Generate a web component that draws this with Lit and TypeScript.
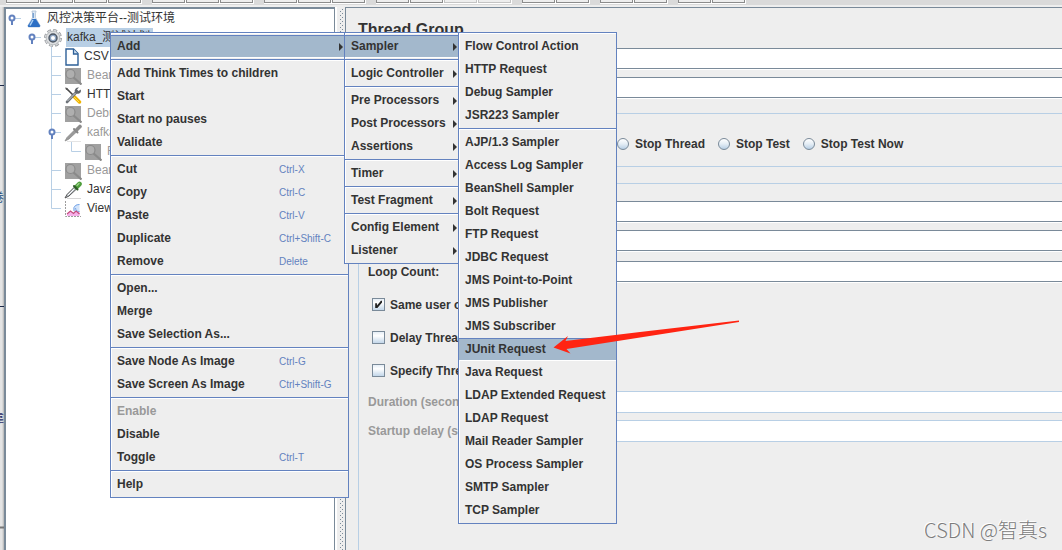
import { LitElement, html, css, svg, nothing } from "lit";
import { customElement, property } from "lit/decorators.js";
import { classMap } from "lit/directives/class-map.js";

type Entry = {
  label: string;
  keys?: string;
  submenu?: boolean;
  selected?: boolean;
  disabled?: boolean;
};
type Group = Entry[];

const mainMenu: Group[] = [
  [{ label: "Add", submenu: true, selected: true }],
  [
    { label: "Add Think Times to children" },
    { label: "Start" },
    { label: "Start no pauses" },
    { label: "Validate" },
  ],
  [
    { label: "Cut", keys: "Ctrl-X" },
    { label: "Copy", keys: "Ctrl-C" },
    { label: "Paste", keys: "Ctrl-V" },
    { label: "Duplicate", keys: "Ctrl+Shift-C" },
    { label: "Remove", keys: "Delete" },
  ],
  [{ label: "Open..." }, { label: "Merge" }, { label: "Save Selection As..." }],
  [
    { label: "Save Node As Image", keys: "Ctrl-G" },
    { label: "Save Screen As Image", keys: "Ctrl+Shift-G" },
  ],
  [
    { label: "Enable", disabled: true },
    { label: "Disable" },
    { label: "Toggle", keys: "Ctrl-T" },
  ],
  [{ label: "Help" }],
];

const addMenu: Group[] = [
  [{ label: "Sampler", submenu: true, selected: true }],
  [{ label: "Logic Controller", submenu: true }],
  [
    { label: "Pre Processors", submenu: true },
    { label: "Post Processors", submenu: true },
    { label: "Assertions", submenu: true },
  ],
  [{ label: "Timer", submenu: true }],
  [{ label: "Test Fragment", submenu: true }],
  [
    { label: "Config Element", submenu: true },
    { label: "Listener", submenu: true },
  ],
];

const samplerMenu: Group[] = [
  ["Flow Control Action", "HTTP Request", "Debug Sampler", "JSR223 Sampler"].map(
    (label) => ({ label })
  ),
  [
    "AJP/1.3 Sampler",
    "Access Log Sampler",
    "BeanShell Sampler",
    "Bolt Request",
    "FTP Request",
    "JDBC Request",
    "JMS Point-to-Point",
    "JMS Publisher",
    "JMS Subscriber",
    "JUnit Request",
    "Java Request",
    "LDAP Extended Request",
    "LDAP Request",
    "Mail Reader Sampler",
    "OS Process Sampler",
    "SMTP Sampler",
    "TCP Sampler",
  ].map((label) => ({ label, selected: label === "JUnit Request" })),
];

@customElement("popup-menu")
export class PopupMenu extends LitElement {
  @property({ attribute: false }) groups: Group[] = [];

  static styles = css`
    :host {
      display: block;
      box-sizing: border-box;
      padding: 2px 0 1px;
      border: 1px solid #6382bf;
      background: #eee;
      box-shadow: inset 1px 1px 0 #fff;
      font: bold 12px/21px "Liberation Sans", Arial, sans-serif;
      color: #333;
    }
    .group + .group {
      margin-top: 1px;
      padding-top: 2px;
      border-top: 1px solid #6382bf;
      box-shadow: inset 0 1px 0 #fff;
    }
    .item {
      display: flex;
      align-items: center;
      width: 100%;
      height: 23px;
      margin: 0;
      padding: 0 5px 0 6px;
      border: 0 solid transparent;
      border-width: 1px 0;
      background: none;
      font: inherit;
      color: inherit;
      text-align: left;
      white-space: nowrap;
    }
    .selected {
      background: #a3b8cc;
      border-top-color: #6382bf;
      border-bottom-color: #fff;
    }
    .item:disabled {
      color: #999;
    }
    .label {
      flex: 1;
    }
    .keys {
      width: 64px;
      font-weight: normal;
      font-size: 10px;
      color: #6382bf;
    }
    .arrow {
      width: 4px;
      height: 8px;
      fill: #333;
    }
  `;

  render() {
    return this.groups.map(
      (group) => html`<div class="group" role="group">
        ${group.map(
          (e) => html`<button
            class=${classMap({ item: true, selected: !!e.selected })}
            role="menuitem"
            ?disabled=${!!e.disabled}
          >
            <span class="label">${e.label}</span>
            ${e.keys ? html`<span class="keys">${e.keys}</span>` : nothing}
            ${e.submenu
              ? html`<svg class="arrow" viewBox="0 0 4 8"><path d="M0 0L4 4L0 8Z" /></svg>`
              : nothing}
          </button>`
        )}
      </div>`
    );
  }
}

const icons: Record<string, unknown> = {
  flask: svg`
    <path d="M8 1h4v1l-.6 1v4.500L16 15.500Q16.500 17 15 17H5Q3.500 17 4 15.500L8.600 7.500V3L8 2Z" fill="#dce8f4" stroke="#a9bcd2" stroke-width=".8"/>
    <path d="M8.300 9H11.900L16 15.500Q16.400 17 15 17H5Q3.600 17 4 15.500Z" fill="#2d6fc4"/>
    <path d="M9 10L6 15.500" stroke="#a9d0f5" stroke-width="1.500"/>
    <path d="M9.200 3V8" stroke="#4f86c6" stroke-width="1"/>`,
  gear: svg`
    <circle cx="9" cy="9" r="7.600" fill="none" stroke="#9a9da1" stroke-width="2.800" stroke-dasharray="3.800 2.169"/>
    <circle cx="9" cy="9" r="6.900" fill="#dcdee0" stroke="#aaadb0" stroke-width=".8"/>
    <circle cx="9" cy="9" r="7.600" fill="none" stroke="#d6d8da" stroke-width="1.400" stroke-dasharray="2.600 3.369" stroke-dashoffset="-.6"/>
    <circle cx="9" cy="9" r="4" fill="#8fa6c4" stroke="#4b5562" stroke-width="1.400"/>
    <circle cx="9" cy="9" r="2" fill="#fff"/>`,
  file: svg`
    <path d="M2 1H9.500L14 5.500V17H2Z" fill="#fff" stroke="#2e6098" stroke-width="1.400"/>
    <path d="M9.500 1V6H14" fill="#cfe0f1" stroke="#2e6098" stroke-width="1.300"/>`,
  search: svg`
    <rect x="1" y="1" width="16" height="16" fill="#a0a0a0"/>
    <path d="M9 10L17.500 17.500" stroke="#8a8a8a" stroke-width="2.200"/>
    <circle cx="6.500" cy="7" r="4.500" fill="#afafaf" stroke="#8a8a8a" stroke-width="1.200"/>`,
  tools: svg`
    <path d="M3 3L10 10" stroke="#444" stroke-width="1.600"/>
    <path d="M1 1.500L3.500 2L4.500 4.500L2 3.800Z" fill="#555"/>
    <path d="M10 10.500L15.500 16" stroke="#f0b400" stroke-width="3.400" stroke-linecap="round"/>
    <path d="M10 11L15 16" stroke="#fbdc58" stroke-width="1"/>
    <path d="M3 16L12 6.500" stroke="#6f747a" stroke-width="2.600" stroke-linecap="round"/>
    <path d="M3.500 15L12 6.500" stroke="#c6cbd1" stroke-width="1"/>
    <path d="M15 1.500L13 3.500L14.500 5L16.800 3.400Q17.500 6.500 15 7.500Q12.500 8.200 11 6.500Q10 4.500 11.500 2.700Q13 1 15 1.500Z" fill="#62676d"/>`,
  dropperOff: svg`
    <path d="M1 17L3 13.500L11 5.500L13 7.500L5 15Z" fill="#9a9a9a" stroke="#8c8c8c" stroke-width=".8"/>
    <path d="M10 5L13.500 8.500" stroke="#858585" stroke-width="2" stroke-linecap="round"/>
    <path d="M12.500 6L16 2.500" stroke="#8c8c8c" stroke-width="3.600" stroke-linecap="round"/>
    <path d="M3 17.500H17" stroke="#ddd" stroke-width=".8"/>`,
  dropper: svg`
    <path d="M1 17L3 13.500L10.500 6L12.500 8L5 15Z" fill="#bfc6cc" stroke="#555" stroke-width="1"/>
    <path d="M4 14L10 8" stroke="#fff" stroke-width="1"/>
    <path d="M12.500 6L15.500 3" stroke="#4f9e3c" stroke-width="4.600" stroke-linecap="round"/>
    <path d="M13 4.500L15 2.500" stroke="#9ed48c" stroke-width="1.200" stroke-linecap="round"/>
    <path d="M10 5L13.500 8.500" stroke="#2e5a27" stroke-width="2" stroke-linecap="round"/>
    <path d="M3 17.500H17" stroke="#ccc" stroke-width=".8"/>`,
  chart: svg`
    <path d="M1.500 1V16.500H17" fill="none" stroke="#9d9d9d" stroke-width="1" stroke-dasharray="2 1"/>
    <path d="M10.500 13Q8.500 8 11 5.500Q13.500 3.500 15.500 4.500V12Z" fill="#d3e4fa"/>
    <path d="M10 11Q9 7 11.500 5.500Q13 4.500 15.500 4.500M15.500 11.500Q12 12 11.500 8" fill="none" stroke="#74a3e6" stroke-width="1"/>
    <path d="M3 16V14L6.500 11L9.500 13.500L12 11.500L15.500 12V16Z" fill="#f6b0ea"/>
    <path d="M3 14L6.500 11L9.500 13.500L12 11L15.500 14" fill="none" stroke="#c44d7e" stroke-width="1.200"/>`,
};

type Node = {
  label: string;
  icon: string;
  open?: boolean;
  disabled?: boolean;
  selected?: boolean;
  guides: string[];
};

/* guides: one cell per level; "h" = handle stub, "v" = line through, "t" = tee, "l" = last child */
const nodes: Node[] = [
  { label: "风控决策平台--测试环境", icon: "flask", open: true, guides: ["h"] },
  { label: "kafka_测试计划", icon: "gear", open: true, selected: true, guides: ["", "h"] },
  { label: "CSV", icon: "file", guides: ["", "", "t"] },
  { label: "Bean", icon: "search", disabled: true, guides: ["", "", "t"] },
  { label: "HTTP", icon: "tools", guides: ["", "", "t"] },
  { label: "Debu", icon: "search", disabled: true, guides: ["", "", "t"] },
  { label: "kafka", icon: "dropperOff", open: true, disabled: true, guides: ["", "", "t"] },
  { label: "R", icon: "search", disabled: true, guides: ["", "", "v", "l"] },
  { label: "Bean", icon: "search", disabled: true, guides: ["", "", "t"] },
  { label: "Java", icon: "dropper", guides: ["", "", "t"] },
  { label: "View", icon: "chart", guides: ["", "", "l"] },
];

const guidePath: Record<string, string> = {
  h: "M6 9.500H15",
  t: "M5.500 0V19M5.500 9.500H15",
  l: "M5.500 0V9.500H15",
  v: "M5.500 0V19",
};

@customElement("plan-tree")
export class PlanTree extends LitElement {
  static styles = css`
    :host {
      display: block;
      background: #fff;
      font: 12px/19px "Liberation Sans", "Noto Sans CJK SC", Arial, sans-serif;
      color: #333;
      overflow: hidden;
    }
    .row {
      display: flex;
      align-items: center;
      height: 19px;
      white-space: nowrap;
    }
    .guide {
      flex: none;
      width: 20px;
      height: 19px;
    }
    .icon {
      flex: none;
      width: 18px;
      height: 18px;
      margin: 0 4px 0 -2px;
    }
    .icon.narrow {
      margin-right: 1px;
    }
    .label {
      height: 19px;
      padding: 0 3px 0 1px;
    }
    .selected {
      background: #b8cfe5;
    }
    .disabled {
      color: #999;
    }
  `;

  render() {
    return nodes.map(
      (n) => html`<div class="row" role="treeitem">
        ${n.guides.map(
          (g, i) => html`<svg class="guide" viewBox="0 0 20 19">
            ${g ? svg`<path d=${guidePath[g]} fill="none" stroke="#b8cfe5"/>` : nothing}
            ${n.open && i === n.guides.length - 1
              ? svg`<path d="M6 11V16" stroke="#6382bf" stroke-width="2"/>
                    <circle cx="6" cy="9" r="2.500" fill="#fff" stroke="#6382bf" stroke-width="2"/>`
              : nothing}
          </svg>`
        )}
        <svg class=${classMap({ icon: true, narrow: n.icon === "file" })} viewBox="0 0 18 18">
          ${icons[n.icon]}
        </svg>
        <span class=${classMap({ label: true, selected: !!n.selected, disabled: !!n.disabled })}
          >${n.label}</span
        >
      </div>`
    );
  }
}

/* Tool buttons by toolbar group; the "off:" prefix marks the greyed ones. */
const toolbar = [
  ["Templates", "New", "Open", "Save"],
  ["Cut", "Copy", "Paste"],
  ["Expand", "Collapse", "Toggle"],
  ["Start", "Start no pauses", "off:Stop", "off:Shutdown"],
  ["Clear", "Clear All"],
  ["Search", "Reset Search"],
  ["Function Helper", "Help"],
];

@customElement("app-root")
export class AppRoot extends LitElement {
  static styles = css`
    :host {
      display: flex;
      position: relative;
      flex-direction: column;
      height: 100vh;
      overflow: hidden;
      background: #eee;
      font: bold 12px/16px "Liberation Sans", "Noto Sans CJK SC", Arial, sans-serif;
      color: #333;
    }
    * {
      box-sizing: border-box;
    }
    .toolbar {
      display: flex;
      flex: none;
      gap: 10px;
      height: 7px;
      padding-left: 6px;
      background: #dadada;
      border-bottom: 2px solid #eee;
    }
    .tools {
      display: flex;
      height: 4px;
      overflow: hidden;
    }
    .tool {
      width: 34px;
      height: 4px;
      padding: 0;
      border: 0 solid #fff;
      border-width: 0 1px 1px 0;
      background: #eee;
      box-shadow: inset 1px -1px 0 #8c8c8c, inset -1px 0 0 #8c8c8c;
    }
    .tool:disabled {
      box-shadow: inset 1px -1px 0 #c4c4c4, inset -1px 0 0 #c4c4c4;
    }
    .body {
      display: flex;
      flex: 1;
      min-height: 0;
    }
    .edge {
      flex: none;
      width: 4px;
      overflow: hidden;
      background: linear-gradient(90deg, #e4e4e4 2px, #b4b4b4);
    }
    .edge-lines {
      display: block;
      width: 4px;
      height: 543px;
      font: 12px "Noto Sans CJK SC", sans-serif;
    }
    .tree {
      flex: none;
      width: 331px;
      border: solid #7a8a99;
      border-width: 2px 1px 0 2px;
    }
    .divider {
      flex: none;
      width: 10px;
      border-left: 2px solid #fff;
    }
    .dots {
      display: block;
      width: 8px;
      height: 100%;
    }
    .pane {
      flex: 1;
      min-width: 0;
      padding: 12px 0 0 12px;
      border: solid #7a8a99;
      border-width: 1px 0 0 1px;
      display: flex;
      flex-direction: column;
    }
    .title {
      margin: 0 0 8px;
      font-size: 16px;
      line-height: 20px;
    }
    .fields {
      display: flex;
      flex-direction: column;
      gap: 8px;
    }
    .field {
      display: flex;
      align-items: center;
      height: 21px;
      white-space: nowrap;
    }
    .name {
      flex: none;
      width: 150px;
    }
    .text {
      flex: 1;
      min-width: 0;
      height: 21px;
      padding: 0 4px;
      border: solid #7a8a99;
      border-width: 1px 0 1px 1px;
      border-radius: 0;
      background: #fff;
      box-shadow: 0 1px 0 #fff;
      font: inherit;
      color: inherit;
      outline: none;
    }
    .off {
      height: 22px;
      color: #999;
    }
    .off .text {
      height: 22px;
      border-color: #b8cfe5;
      box-shadow: none;
    }
    .panel {
      min-width: 0;
      margin: 0;
      border: solid #b8cfe5;
      border-width: 1px 0 1px 1px;
    }
    .actions {
      height: 54px;
      margin: 15px 0 16px;
      padding: 22px 0 0 10px;
    }
    .radios {
      display: flex;
      align-items: center;
      gap: 13px;
      white-space: nowrap;
    }
    .choice {
      display: flex;
      align-items: center;
      gap: 6px;
      white-space: nowrap;
    }
    .on-error {
      flex: none;
      display: flex;
      justify-content: flex-end;
      width: 235px;
    }
    .radio,
    .tick {
      flex: none;
      appearance: none;
      width: 12px;
      height: 12px;
      margin: 0;
      border: 1px solid #7a8a99;
      border-radius: 50%;
      background: linear-gradient(#fff, #e4edf5 50%, #b8cfe5);
    }
    .tick {
      width: 13px;
      height: 13px;
      border-radius: 0;
      background: linear-gradient(#e6eef6, #fff 35%, #c2d6e9);
    }
    .tick:checked::before {
      content: "";
      display: block;
      width: 11px;
      height: 11px;
      background: #222;
      clip-path: polygon(20% 38%, 36% 38%, 36% 58%, 72% 16%, 82% 16%, 82% 32%, 40% 82%, 20% 82%);
    }
    .threads {
      flex: 1;
      padding: 17px 0 0 9px;
      border-bottom: 0;
    }
    .loop {
      margin-top: 10px;
    }
    .ticks {
      display: grid;
      grid-auto-rows: 33px;
      margin: 6px 0 4px;
      padding-left: 4px;
    }
    .ticks .choice {
      gap: 5px;
    }
    .schedule {
      gap: 7px;
    }
    .menu-main,
    .menu-add,
    .menu-sampler {
      position: absolute;
      top: 32px;
      left: 110px;
      width: 239px;
    }
    .menu-add {
      left: 344px;
      width: 119px;
    }
    .menu-sampler {
      left: 458px;
      width: 159px;
    }
    .pointer {
      position: absolute;
      top: 320px;
      left: 552px;
      width: 190px;
      height: 36px;
      pointer-events: none;
    }
    .watermark {
      position: absolute;
      right: 15px;
      bottom: 6px;
      font: 300 20px/28px "Noto Sans CJK SC", sans-serif;
      color: #7c7c7c;
      text-shadow: -1px -1px 0 #fff;
    }
  `;

  private field(id: string, label: string, off = false) {
    return html`<div class=${classMap({ field: true, off })}>
      <label class="name" for=${id}>${label}</label>
      <input class="text" id=${id} type="text" ?disabled=${off} />
    </div>`;
  }

  private radio(label: string) {
    return html`<label class="choice"
      ><input class="radio" type="radio" name="on-error" />${label}</label
    >`;
  }

  private tick(label: string, checked = false) {
    return html`<label class="choice"
      ><input class="tick" type="checkbox" .checked=${checked} />${label}</label
    >`;
  }

  render() {
    return html`
      <div class="toolbar" role="toolbar">
        ${toolbar.map(
          (g) => html`<div class="tools">
            ${g.map((t) => {
              const off = t.startsWith("off:");
              return html`<button class="tool" aria-label=${t.replace("off:", "")} ?disabled=${off}></button>`;
            })}
          </div>`
        )}
      </div>
      <div class="body">
        <div class="edge">
          <svg class="edge-lines" viewBox="0 0 4 543">
            <path d="M0 78.500H4M0 299.500H4" stroke="#1c2a4a" />
            <path d="M0 520.500H4" stroke="#777" stroke-width="2" />
            <text x="4" y="195" text-anchor="end" fill="#24507e">卷</text>
            <text x="4" y="416" text-anchor="end" fill="#2c2c66">靠</text>
          </svg>
        </div>
        <plan-tree class="tree" role="tree"></plan-tree>
        <div class="divider">
          <svg class="dots">
            <defs>
              <pattern id="grip" width="4" height="4" patternUnits="userSpaceOnUse">
                <path d="M3 0h1v1h-1zM1 2h1v1h-1z" fill="#7a8a99" />
              </pattern>
            </defs>
            <rect x="3" y="2" width="4" height="100%" fill="url(#grip)" />
          </svg>
        </div>
        <main class="pane">
          <h1 class="title">Thread Group</h1>
          <div class="fields">
            ${this.field("name", "Name:")} ${this.field("comments", "Comments:")}
          </div>
          <fieldset class="panel actions" aria-label="Action to be taken after a Sampler error">
            <div class="radios">
              <div class="on-error">${this.radio("Continue")}</div>
              ${this.radio("Stop Thread")} ${this.radio("Stop Test")} ${this.radio("Stop Test Now")}
            </div>
          </fieldset>
          <fieldset class="panel threads" aria-label="Thread Properties">
            <div class="fields">
              ${this.field("threads", "Number of Threads:")} ${this.field("ramp", "Ramp-up period:")}
            </div>
            <div class="loop">${this.field("loops", "Loop Count:")}</div>
            <div class="ticks">
              ${this.tick("Same user on", true)} ${this.tick("Delay Thread")}
              ${this.tick("Specify Thread")}
            </div>
            <div class="fields schedule">
              ${this.field("duration", "Duration (seconds):", true)}
              ${this.field("delay", "Startup delay (seconds):", true)}
            </div>
          </fieldset>
        </main>
      </div>
      <popup-menu class="menu-main" role="menu" .groups=${mainMenu}></popup-menu>
      <popup-menu class="menu-add" role="menu" .groups=${addMenu}></popup-menu>
      <popup-menu class="menu-sampler" role="menu" .groups=${samplerMenu}></popup-menu>
      <svg class="pointer" viewBox="0 0 190 36">
        <path d="M1.500 27.500L16 16L13.500 21L88 12L187 .6V2L88 17.500L14.500 29L18.500 33.500Z" fill="#ff2412" />
      </svg>
      <div class="watermark">CSDN @智真s</div>
    `;
  }
}
